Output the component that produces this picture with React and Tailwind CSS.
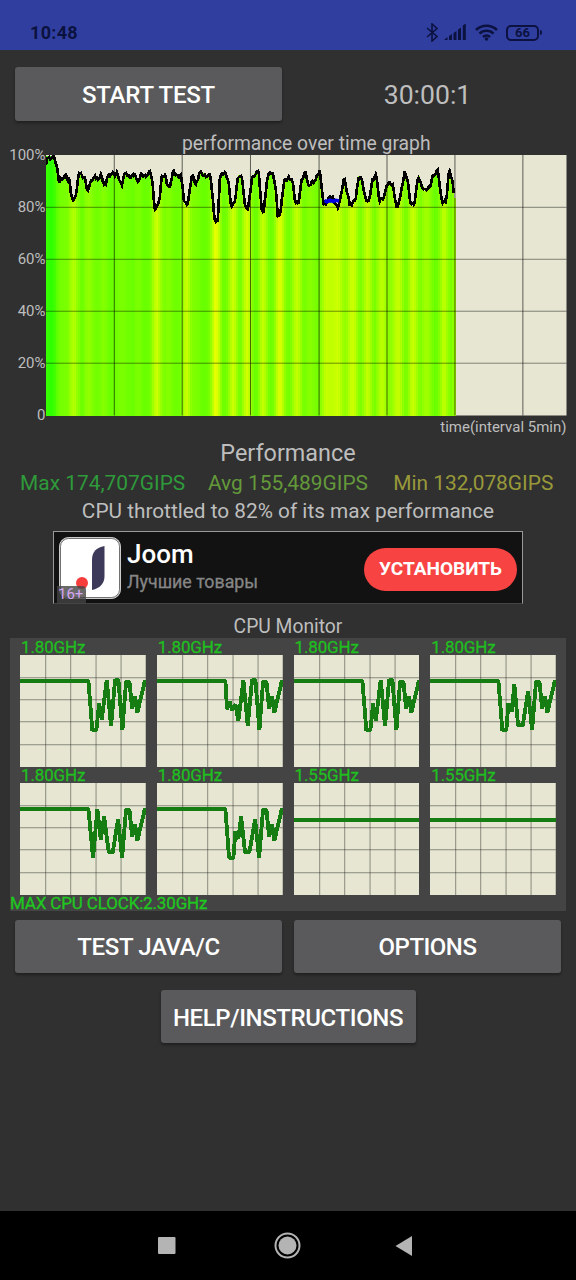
// Throttling curve, three units to a pixel, y grows downwards from 100%
const HISTORY = [
  [0, 30], [3, 4], [22, 4], [27, 20], [34, 43], [40, 80], [46, 65], [60, 67], [65, 83], [70, 70],
  [75, 110], [81, 133], [86, 120], [92, 115], [99, 58], [118, 65], [124, 103], [129, 107], [135, 80],
  [141, 77], [147, 56], [150, 67], [165, 65], [173, 90], [180, 88], [184, 57], [197, 53], [207, 67],
  [214, 55], [227, 85], [234, 60], [252, 68], [257, 55], [268, 54], [275, 93], [286, 57], [312, 57],
  [319, 75], [325, 150], [328, 160], [334, 147], [342, 125], [347, 73], [359, 63], [364, 85], [370, 93],
  [376, 73], [382, 55], [392, 65], [405, 56], [410, 85], [415, 147], [425, 153], [430, 120],
  [437, 58], [444, 58], [448, 86], [456, 85], [460, 54], [478, 56], [494, 67], [500, 125], [505, 183],
  [510, 195], [516, 187], [522, 70], [540, 55], [548, 73], [556, 150], [562, 157], [568, 140], [577, 60],
  [589, 60], [598, 165], [607, 165], [618, 67], [625, 55], [639, 57], [647, 163], [654, 165], [664, 65],
  [680, 57], [689, 85], [696, 175], [704, 180], [715, 80], [729, 62], [739, 73], [748, 145], [758, 145],
  [768, 66], [779, 57], [789, 97], [798, 76], [817, 68], [822, 49], [826, 85], [834, 142], [844, 137],
  [860, 130], [868, 140], [875, 152], [887, 125], [895, 70], [904, 105], [912, 140], [920, 152],
  [930, 135], [939, 63], [949, 65], [959, 140], [970, 142], [979, 73], [990, 56], [994, 85],
  [1001, 142], [1016, 120], [1022, 86], [1042, 94], [1053, 152], [1065, 125], [1077, 55],
  [1085, 65], [1095, 140], [1105, 160], [1118, 60], [1124, 75], [1139, 114], [1152, 97],
  [1162, 55], [1178, 53], [1183, 105], [1189, 139], [1202, 130], [1210, 53], [1217, 67],
  [1222, 90], [1225, 128],
];

const TAIL = "285,75 295,75 307,225 318,80 328,80 336,160 345,125 352,172 375,75";
const DIP_TAIL = "294,109 306,225 318,80 328,80 336,160 345,125 352,172 375,75";

const CORES = [
  { clock: "1.80GHz", line: `0,77 205,77 217,226 229,226 237,145 245,195 260,75 273,213 ${TAIL}` },
  { clock: "1.80GHz", line: `0,77 205,77 210,163 218,140 225,165 235,148 244,197 259,75 272,212 ${TAIL}` },
  { clock: "1.80GHz", line: `0,77 205,77 217,226 229,226 237,145 245,198 260,75 273,213 ${TAIL}` },
  { clock: "1.80GHz", line: `0,77 205,77 217,226 229,226 235,145 245,170 253,88 264,211 278,211 ${DIP_TAIL}` },
  { clock: "1.80GHz", line: `0,77 205,77 219,225 232,79 242,170 252,100 266,208 278,208 ${DIP_TAIL}` },
  { clock: "1.80GHz", line: `0,77 205,77 216,225 229,225 235,145 244,168 252,100 264,208 277,208 ${DIP_TAIL}` },
  { clock: "1.55GHz", line: "0,112 377,112" },
  { clock: "1.55GHz", line: "0,112 377,112" },
];

function levelAt(x) {
  const i = HISTORY.findIndex((p) => p[0] > x);
  if (i < 1) return HISTORY[HISTORY.length - 1][1];
  const [x0, y0] = HISTORY[i - 1];
  const [x1, y1] = HISTORY[i];
  return y0 + ((y1 - y0) * (x - x0)) / (x1 - x0);
}

function barColor(x) {
  const avg = (levelAt(Math.max(0, x - 7)) + levelAt(x) + levelAt(Math.min(1224, x + 7))) / 3;
  const red = Math.min(255, Math.round(42 + avg * 1.12));
  return `rgb(${red},255,0)`;
}

const COLUMNS = Array.from({ length: 205 }, (_, i) => i * 6);
const NOISE = [0, -7, 5, -3, 9, -5, 2, 7, -9, 3, -2, 6];
const CURVE = Array.from({ length: 409 }, (_, i) => {
  const x = i * 3;
  return `${x},${Math.max(5, levelAt(x) + NOISE[(i * 7) % 12]).toFixed(1)}`;
}).join(" ");

function Button({ children, className }) {
  return (
    <button className={`flex items-center justify-center rounded-[3px] bg-[#5a5a5c] text-2xl font-medium text-white shadow-[0_2px_3px_rgba(0,0,0,0.35)] ${className}`}>
      {children}
    </button>
  );
}

function StatusBar() {
  return (
    <header className="flex h-[50px] items-end justify-between bg-[#303f9f] pr-[34px] pb-2 pl-[30px] text-[#0c1240]">
      <span className="text-lg leading-[19px] font-bold tracking-[0.3px]">10:48</span>
      <div className="flex items-center">
        <svg width="12" height="19" viewBox="0 0 12 19" fill="none" stroke="currentColor" strokeWidth="1.6">
          <path d="M1 5l10 8.500-5 4.500V1l5 4.500L1 14" />
        </svg>
        <svg className="ml-1.5" width="23" height="17" viewBox="0 0 23 17" fill="currentColor">
          <path d="M0 16l3.500-3v3zM5 12l3-2v6H5zM9.500 9l3-2v9h-3zM14 5.500l3-2V16h-3zM18.800 1.500l3-2V16h-3z" />
        </svg>
        <svg className="ml-2" width="23" height="17" viewBox="0 0 23 17" fill="none" stroke="currentColor" strokeWidth="2.6">
          <path d="M1 6a15 15 0 0 1 21 0M4.500 9.600a10 10 0 0 1 14 0M8 13a5.200 5.200 0 0 1 7 0" />
          <circle cx="11.500" cy="15" r="1.800" fill="currentColor" stroke="none" />
        </svg>
        <div className="ml-2 flex h-4 w-[33px] items-center justify-center rounded-[5px] border-2 border-current text-[13px] font-bold">66</div>
        <div className="ml-px h-[5px] w-0.5 rounded-r bg-current" />
      </div>
    </header>
  );
}

function PerformanceGraph() {
  return (
    <section className="flex h-[312px] pr-[9.5px]">
      <div className="w-[46px] pr-[0.5px] text-right text-[15px] text-[#bebebe]">
        {["100%", "80%", "60%", "40%", "20%", "0"].map((label) => (
          <div key={label} className="h-[52px] leading-[52px]">{label}</div>
        ))}
      </div>
      <div className="flex-1">
        <h2 className="h-[26px] text-center text-[19.3px] leading-[29px] text-[#bebebe]">performance over time graph</h2>
        <svg className="block h-[260.5px] w-full" viewBox="0 0 1563 782" preserveAspectRatio="none">
          <rect width="1563" height="782" fill="#e6e6d2" />
          <g shapeRendering="crispEdges">
            {COLUMNS.map((x) => (
              <rect key={x} x={x} y={levelAt(x + 3)} width="6" height={782 - levelAt(x + 3)} fill={barColor(x + 3)} />
            ))}
          </g>
          <g stroke="#000" strokeOpacity="0.6" strokeWidth="3">
            {[205, 409, 614, 820, 1024, 1228, 1432].map((x) => (
              <path key={x} d={`M${x} 0V782`} />
            ))}
            {[157, 313, 469, 625].map((y) => (
              <path key={y} d={`M0 ${y}H1563`} strokeOpacity="0.45" />
            ))}
          </g>
          <polyline points={CURVE} fill="none" stroke="#000" strokeWidth="8" strokeLinejoin="miter" shapeRendering="crispEdges" />
          <path d="M836 137l8 3 8-4 10 3 8-3 10 2" fill="none" stroke="#0000e6" strokeWidth="11" />
        </svg>
        <p className="text-right text-[15px] leading-[22px] text-[#bebebe]">time(interval 5min)</p>
      </div>
    </section>
  );
}

function AdBanner() {
  return (
    <section className="mx-auto flex h-[73px] w-[470px] items-center border border-[#999] border-b-[#444] bg-[#121212] pr-[5px] pl-[5px]">
      <div className="relative h-[62px] w-[62px]">
        <svg width="62" height="62" viewBox="0 0 62 62">
          <rect x="0.500" y="0.500" width="61" height="61" rx="9" fill="#fff" stroke="#ccc" />
          <rect x="1.500" y="1.500" width="59" height="59" rx="8" fill="#fff" stroke="#333" strokeWidth="0.700" />
          <path d="M45.500 9v30q0 11-12.500 14V23q0-12 12.500-14z" fill="#3c3a58" />
          <circle cx="23" cy="46" r="6" fill="#f73c3c" />
        </svg>
        <span className="absolute -bottom-1 -left-0.5 h-[17px] w-[29px] rounded-tr bg-[#444]/80 pl-px text-[15px] leading-[17px] text-[#d3a6f2]">16+</span>
      </div>
      <div className="ml-1.5 flex-1 pb-0.5">
        <h3 className="text-[26px] leading-[30px] font-medium text-white">Joom</h3>
        <p className="text-[17.8px] leading-[26px] text-[#868686] [-webkit-text-stroke:0.3px]">Лучшие товары</p>
      </div>
      <button className="mt-[3px] h-[43px] w-[153px] rounded-full bg-[#f84343] text-[19px] font-bold text-white">УСТАНОВИТЬ</button>
    </section>
  );
}

function Core({ clock, line }) {
  return (
    <div>
      <div className="h-4 pl-px text-[17px] leading-[17px] tracking-[-0.15px] text-[#1fbf1f] [-webkit-text-stroke:0.3px]">{clock}</div>
      <svg className="block h-[112px] w-full" viewBox="0 0 377 336" preserveAspectRatio="none">
        <rect width="377" height="336" fill="#e6e6d2" />
        <g stroke="#000" strokeOpacity="0.4" strokeWidth="3">
          {[77, 152, 228, 303].map((x) => (
            <path key={x} d={`M${x} 0V336`} />
          ))}
          {[68, 134, 200, 269].map((y) => (
            <path key={y} d={`M0 ${y}H377`} />
          ))}
        </g>
        <polyline points={line} fill="none" stroke="#167d12" strokeWidth="11.500" strokeLinejoin="bevel" shapeRendering="crispEdges" />
      </svg>
    </div>
  );
}

function CpuMonitor() {
  return (
    <section className="mx-2.5 h-[273px] bg-[#444] pt-px">
      <div className="grid grid-cols-4 gap-x-[11px] px-2.5">
        {CORES.map((core, i) => (
          <Core key={i} {...core} />
        ))}
      </div>
      <p className="text-[17px] leading-[17px] tracking-[-0.15px] text-[#1fc81f] [-webkit-text-stroke:0.3px]">MAX CPU CLOCK:2.30GHz</p>
    </section>
  );
}

function App() {
  return (
    <div className="flex h-[1280px] w-[576px] flex-col overflow-hidden bg-[#303030] font-['Roboto',sans-serif] text-[#bebebe]">
      <StatusBar />
      <main className="flex flex-1 flex-col">
        <div className="mt-[17px] mb-[8px] flex items-center px-[15px]">
          <Button className="h-[54px] w-[267px] pt-0.5 tracking-[-0.2px]">START TEST</Button>
          <div className="ml-3 flex-1 pt-0.5 text-center text-[26.6px]">30:00:1</div>
        </div>

        <PerformanceGraph />

        <h2 className="h-[26px] text-center text-[23.4px] leading-[25px]">Performance</h2>
        <div className="grid h-[30px] grid-cols-3 px-2.5 text-center text-[20.9px] leading-[32px]">
          <span className="text-[#2e9a3a]">Max 174,707GIPS</span>
          <span className="text-[#64993a]">Avg 155,489GIPS</span>
          <span className="text-[#99993a]">Min 132,078GIPS</span>
        </div>
        <p className="h-[34px] text-center text-[20.8px] leading-[28px]">CPU throttled to 82% of its max performance</p>

        <AdBanner />

        <h2 className="h-[34px] pt-[9px] text-center text-[19.3px] leading-7">CPU Monitor</h2>
        <CpuMonitor />

        <div className="mt-[9px] flex gap-3 px-[15px]">
          <Button className="h-[53px] flex-1 tracking-[-0.35px]">TEST JAVA/C</Button>
          <Button className="h-[53px] flex-1 tracking-[-0.5px]">OPTIONS</Button>
        </div>
        <Button className="mt-[17px] h-[53px] w-[255px] self-center pt-0.5 tracking-[-0.4px]">HELP/INSTRUCTIONS</Button>
      </main>

      <nav className="flex h-[69px] items-center justify-center bg-black pr-1.5">
        <svg width="20" height="20" viewBox="0 0 20 20">
          <rect x="1" y="1" width="17.500" height="17" rx="1" fill="#b4b4b4" />
        </svg>
        <svg className="mr-[94px] ml-[97px]" width="27" height="27" viewBox="0 0 27 27">
          <circle cx="13.500" cy="13.500" r="12" fill="none" stroke="#b4b4b4" strokeWidth="2" />
          <circle cx="13.500" cy="13.500" r="9" fill="#b4b4b4" />
        </svg>
        <svg width="18" height="20" viewBox="0 0 18 20">
          <path d="M17 0v20L0.500 10z" fill="#b4b4b4" />
        </svg>
      </nav>
    </div>
  );
}

export default App;
